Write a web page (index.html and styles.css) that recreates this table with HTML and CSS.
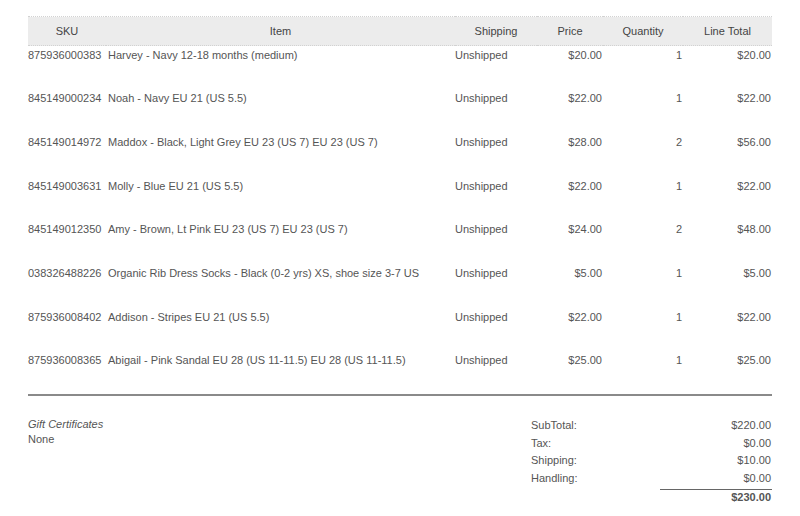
FILE: index.html
```
<!DOCTYPE html>
<html>
	<head>
		<meta charset="utf-8">
		<link rel="stylesheet" href="styles.css">
	</head>
	<body>
		<div id="order">
			<table class="items">
				<thead>
					<tr>
						<th class="c-sku">SKU</th>
						<th class="c-item">Item</th>
						<th class="c-ship">Shipping</th>
						<th class="c-price">Price</th>
						<th class="c-qty">Quantity</th>
						<th class="c-total">Line Total</th>
					</tr>
				</thead>
				<tbody>
					<tr><td>875936000383</td><td class="item">Harvey - Navy 12-18 months (medium)</td><td>Unshipped</td><td class="num">$20.00</td><td class="num">1</td><td class="num">$20.00</td></tr>
					<tr><td>845149000234</td><td class="item">Noah - Navy EU 21 (US 5.5)</td><td>Unshipped</td><td class="num">$22.00</td><td class="num">1</td><td class="num">$22.00</td></tr>
					<tr><td>845149014972</td><td class="item">Maddox - Black, Light Grey EU 23 (US 7) EU 23 (US 7)</td><td>Unshipped</td><td class="num">$28.00</td><td class="num">2</td><td class="num">$56.00</td></tr>
					<tr><td>845149003631</td><td class="item">Molly - Blue EU 21 (US 5.5)</td><td>Unshipped</td><td class="num">$22.00</td><td class="num">1</td><td class="num">$22.00</td></tr>
					<tr><td>845149012350</td><td class="item">Amy - Brown, Lt Pink EU 23 (US 7) EU 23 (US 7)</td><td>Unshipped</td><td class="num">$24.00</td><td class="num">2</td><td class="num">$48.00</td></tr>
					<tr><td>038326488226</td><td class="item">Organic Rib Dress Socks - Black (0-2 yrs) XS, shoe size 3-7 US</td><td>Unshipped</td><td class="num">$5.00</td><td class="num">1</td><td class="num">$5.00</td></tr>
					<tr><td>875936008402</td><td class="item">Addison - Stripes EU 21 (US 5.5)</td><td>Unshipped</td><td class="num">$22.00</td><td class="num">1</td><td class="num">$22.00</td></tr>
					<tr><td>875936008365</td><td class="item">Abigail - Pink Sandal EU 28 (US 11-11.5) EU 28 (US 11-11.5)</td><td>Unshipped</td><td class="num">$25.00</td><td class="num">1</td><td class="num">$25.00</td></tr>
				</tbody>
			</table>

			<div class="summary">
				<div class="gift">
					<p class="gift-title">Gift Certificates</p>
					<p>None</p>
				</div>
				<div class="totals">
					<div class="trow"><span>SubTotal:</span><span>$220.00</span></div>
					<div class="trow"><span>Tax:</span><span>$0.00</span></div>
					<div class="trow"><span>Shipping:</span><span>$10.00</span></div>
					<div class="trow"><span>Handling:</span><span>$0.00</span></div>
					<div class="grand">$230.00</div>
				</div>
			</div>
		</div>
	</body>
</html>
```
FILE: styles.css
```
body {
	margin: 0;
	padding: 0;
	background-color: white;
	font-family: "Liberation Sans", Arial, sans-serif;
	font-size: 11px;
	color: #555;
}

#order {
	width: 744px;
	padding: 16px 0 0 28px;
}

.items {
	width: 744px;
	border-collapse: collapse;
	table-layout: fixed;
	border-bottom: 2px solid #8a8a8a;
	font-size: 11px;
}

.items th {
	background-color: #ececec;
	border-top: 1px dotted #d2d2d2;
	border-bottom: 1px dotted #d2d2d2;
	color: #444;
	font-weight: normal;
	height: 28px;
	padding: 0;
	text-align: center;
}

.c-sku { width: 78px; }
.c-item { width: 349px; }
.c-ship { width: 82px; }
.c-price { width: 66px; }
.c-qty { width: 80px; }
.c-total { width: 89px; }

.items td {
	vertical-align: top;
	height: 43.7px;
	padding: 2px 1px 0 0;
	box-sizing: border-box;
	line-height: 14px;
	white-space: nowrap;
}

.items td.item {
	padding-left: 2px;
}

.items td.num {
	text-align: right;
}

.summary {
	display: flex;
	justify-content: space-between;
	padding-top: 21px;
}

.gift p {
	margin: 0;
	line-height: 15px;
}

.gift-title {
	font-style: italic;
}

.totals {
	width: 241px;
	display: flex;
	flex-direction: column;
	align-items: flex-end;
}

.trow {
	width: 241px;
	display: flex;
	justify-content: space-between;
	line-height: 17.7px;
	padding-right: 1px;
	box-sizing: border-box;
}

.grand {
	width: 112px;
	border-top: 1px solid #666;
	margin-top: 1px;
	text-align: right;
	font-weight: bold;
	padding-right: 1px;
	box-sizing: border-box;
	line-height: 15px;
}
```
